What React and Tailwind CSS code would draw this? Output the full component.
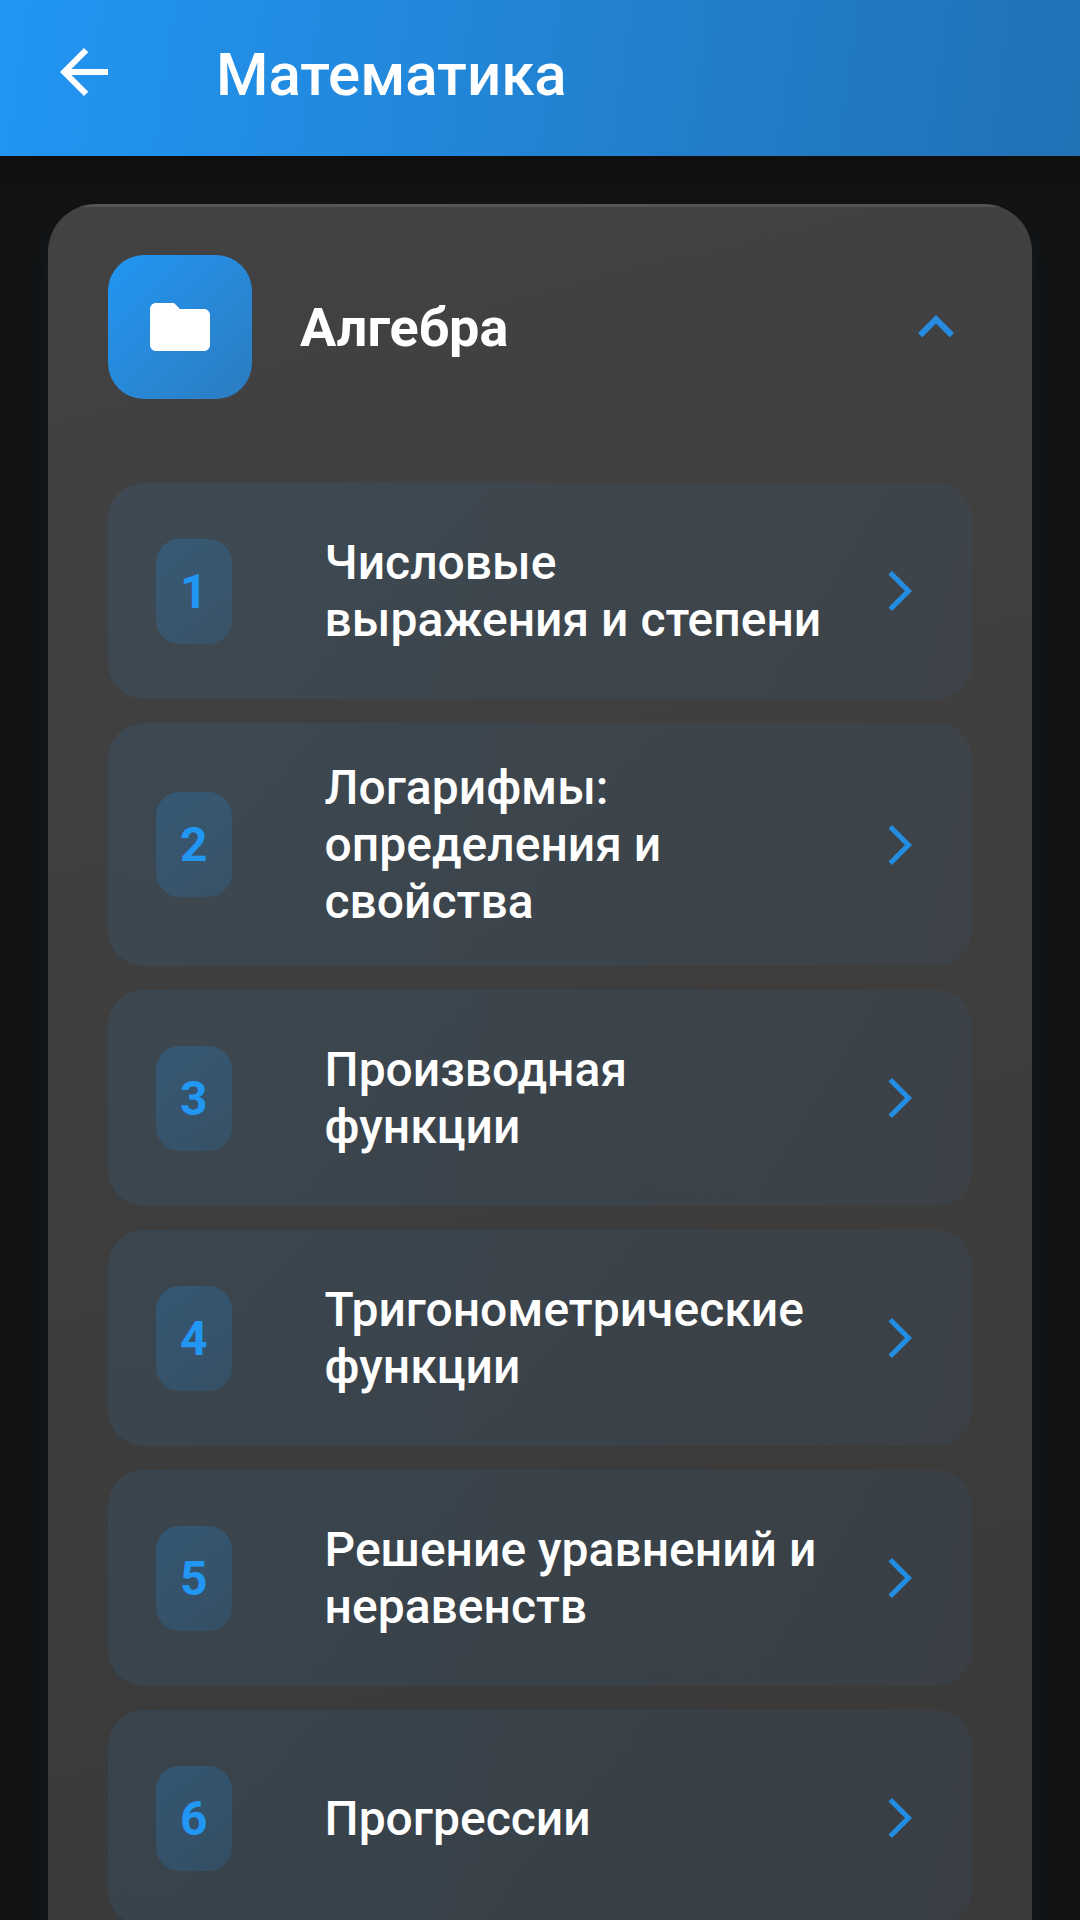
import { useState } from 'react';
import { MdArrowBack, MdArrowForwardIos, MdExpandLess, MdFolder } from 'react-icons/md';

const topics = [
  'Числовые выражения и степени',
  'Логарифмы: определения и свойства',
  'Производная функции',
  'Тригонометрические функции',
  'Решение уравнений и неравенств',
  'Прогрессии',
];

function TopicRow({ number, title }) {
  return (
    <li>
      <a
        href={`#topic-${number}`}
        className="flex min-h-[216px] items-center rounded-[36px] bg-linear-104 from-[#2196f3]/10 to-[#2196f3]/5 px-12 py-9"
      >
        <span className="shrink-0 rounded-3xl bg-linear-144 from-[#2196f3]/22 to-[#2196f3]/14 p-6 text-5xl leading-[57px] font-bold text-[#2196f3]">
          {number}
        </span>
        <span className="mr-12 ml-[93px] flex-1 text-5xl leading-[57px] font-medium text-white">
          {title}
        </span>
        <MdArrowForwardIos className="size-12 shrink-0 text-[#2196f3]/90" aria-hidden="true" />
      </a>
    </li>
  );
}

export default function App() {
  const [isOpen, setIsOpen] = useState(true);

  return (
    <div className="flex h-screen flex-col bg-[#121212] font-[Roboto,sans-serif] text-white">
      <header className="relative flex items-end bg-linear-98 from-[#2196f3] to-[#2171b5] px-12 pt-9 pb-12 shadow-[0_6px_24px_rgba(0,0,0,0.3)]">
        <button type="button" aria-label="Назад">
          <MdArrowBack className="size-18" />
        </button>
        <h1 className="ml-24 text-6xl leading-[66px] font-medium">Математика</h1>
      </header>

      <main className="flex-1 overflow-y-auto px-12 pt-12 [scrollbar-width:none]">
        <section className="mb-12 overflow-hidden rounded-[48px] bg-linear-165 from-[#424242] to-[#393939] shadow-[0_12px_30px_rgba(33,150,243,0.08)]">
          {/* highlight along the top edge */}
          <div className="h-[3px] bg-white/10" />

          <div className="px-15 py-12">
            <button
              type="button"
              aria-expanded={isOpen}
              onClick={() => setIsOpen(!isOpen)}
              className="flex w-full items-center text-left"
            >
              <span className="flex size-36 items-center justify-center rounded-[36px] bg-linear-135 from-[#2196f3] to-[#2b7cc0]">
                <MdFolder className="size-18" aria-hidden="true" />
              </span>
              <span className="ml-12 flex-1 text-[54px] leading-[63px] font-bold">Алгебра</span>
              <MdExpandLess
                className={`size-18 text-[#2196f3]/90 ${isOpen ? '' : 'rotate-180'}`}
                aria-hidden="true"
              />
            </button>

            {isOpen && (
              <ul className="mt-21 flex flex-col gap-6">
                {topics.map((title, index) => (
                  <TopicRow key={title} number={index + 1} title={title} />
                ))}
              </ul>
            )}
          </div>
        </section>
      </main>
    </div>
  );
}
